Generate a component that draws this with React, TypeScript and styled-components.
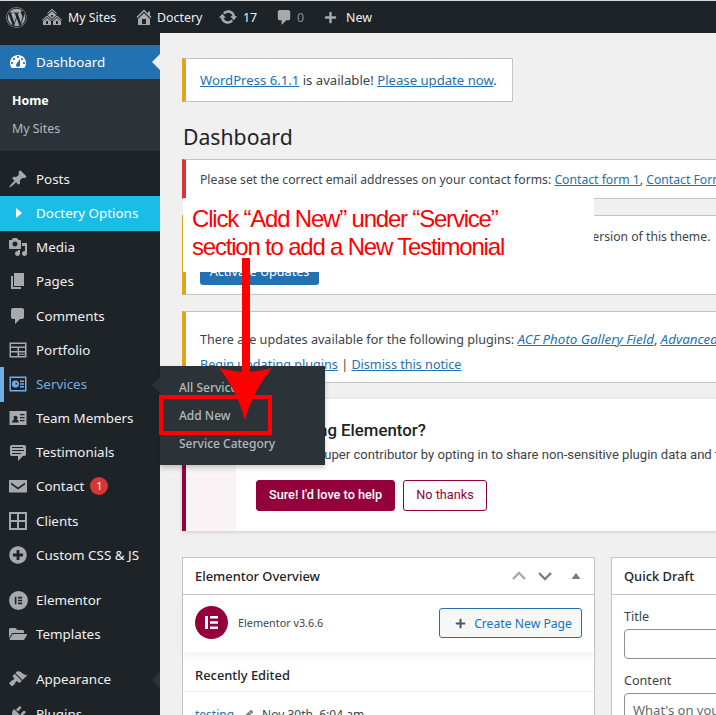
import React from 'react';
import styled, { createGlobalStyle } from 'styled-components';
import { FaWordpress, FaFolderOpen, FaPlusCircle, FaPlus, FaPen } from 'react-icons/fa';

const GlobalStyle = createGlobalStyle`
  html, body {
    margin: 0;
    padding: 0;
    background: #f0f0f1;
  }
  body {
    font-family: "Noto Sans", "Open Sans", sans-serif;
  }
  a {
    color: #2271b1;
  }
`;

const PATHS: Record<string, string> = {
  sites: 'M14.27 6.87L10 3.14 5.73 6.87 5 6.14l5-4.38 5 4.38zM14 8.42l-4.05 3.43L6 8.38v-.74l4-3.5 4 3.5v.78zM11 9.7V8H9v1.7h2zm-1.73 4.03L5 10 .73 13.73 0 13l5-4.38L10 13zm10 0L15 10l-4.27 3.73L10 13l5-4.38L20 13zM5 11l4 3.5V18H1v-3.5zm10 0l4 3.5V18h-8v-3.5zM6 17v-3H4v3h2zm10 0v-3h-2v3h2z',
  home: 'M16 8.5l1.53 1.53-1.06 1.06L10 4.62l-6.47 6.47-1.06-1.06L10 2.5l4 4v-2h2v4zm-6-2.46l6 5.99V18H4v-5.97zM12 17v-5H8v5h4z',
  update: 'M10.2 3.28c3.53 0 6.43 2.61 6.92 6h2.08l-3.5 4-3.5-4h2.32c-.45-1.97-2.21-3.45-4.32-3.45-1.45 0-2.73.71-3.54 1.78L4.95 5.66C6.23 4.2 8.11 3.28 10.2 3.28zm-.4 13.44c-3.52 0-6.43-2.61-6.92-6H.8l3.5-4c1.17 1.33 2.33 2.67 3.5 4H5.48c.45 1.97 2.21 3.45 4.32 3.45 1.45 0 2.73-.71 3.54-1.78l1.71 1.95c-1.28 1.46-3.15 2.38-5.25 2.38z',
  comment: 'M5 2h9c1.1 0 2 .9 2 2v7c0 1.1-.9 2-2 2h-2l-5 5v-5H5c-1.1 0-2-.9-2-2V4c0-1.1.9-2 2-2z',
  dashboard: 'M3.76 16h12.48c1.1-1.37 1.76-3.11 1.76-5 0-4.42-3.58-8-8-8s-8 3.58-8 8c0 1.89.66 3.63 1.76 5zM10 4c.55 0 1 .45 1 1s-.45 1-1 1-1-.45-1-1 .45-1 1-1zM6 6c.55 0 1 .45 1 1s-.45 1-1 1-1-.45-1-1 .45-1 1-1zm8 0c.55 0 1 .45 1 1s-.45 1-1 1-1-.45-1-1 .45-1 1-1zm-5.37 5.55L12 7v6c0 1.1-.9 2-2 2s-2-.9-2-2c0-.57.24-1.08.63-1.45zM4 10c.55 0 1 .45 1 1s-.45 1-1 1-1-.45-1-1 .45-1 1-1zm12 0c.55 0 1 .45 1 1s-.45 1-1 1-1-.45-1-1 .45-1 1-1z',
  post: 'M10.44 3.02l1.82-1.82 6.36 6.35-1.83 1.82c-1.05-.68-2.48-.57-3.41.36l-.75.75c-.92.93-1.04 2.35-.35 3.41l-1.83 1.82-2.41-2.41-2.8 2.79c-.42.42-3.38 2.71-3.8 2.29s1.86-3.39 2.28-3.81l2.79-2.79L4.1 9.36l1.83-1.82c1.05.69 2.48.57 3.4-.36l.75-.75c.93-.92 1.05-2.35.36-3.41z',
  media: 'M13 11V4c0-.55-.45-1-1-1h-1.67L9 1H5L3.67 3H2c-.55 0-1 .45-1 1v7c0 .55.45 1 1 1h10c.55 0 1-.45 1-1zM7 4.5c1.38 0 2.5 1.12 2.5 2.5S8.38 9.5 7 9.5 4.5 8.38 4.5 7 5.62 4.5 7 4.5zM14 6h5v10.5c0 1.38-1.12 2.5-2.5 2.5S14 17.88 14 16.5s1.12-2.5 2.5-2.5c.17 0 .34.02.5.05V9h-3V6zm-4 8.05V13h2v3.5c0 1.38-1.12 2.5-2.5 2.5S7 17.88 7 16.5 8.12 14 9.5 14c.17 0 .34.02.5.05z',
  page: 'M6 15V2h10v13H6zm-1 1h8v2H3V5h2v11z',
  portfolio: 'M1.5 2.500h17v15h-17zM3 4v2.500h14V4zM3 8v3h6.500V8zM11 8v3h6V8zM3 12.500V16h6.500v-3.500zM11 12.500v1.200h6v-1.200zM11 14.800V16h6v-1.200z',
  services: 'M1.5 2.500h17v15h-17zM3 4v12h14V4zM7.500 6.500a3.500 3.500 0 1 1-.01 7A3.500 3.500 0 0 1 7.500 6.500zM7.500 8.500v2h2a2 2 0 0 0-2-2zM12 6.500h4V8h-4zM12 9.300h4v1.400h-4zM12 12h4v1.500h-4z',
  team: 'M1.5 3h17v14h-17zM3.500 14.500h7v-1.300c0-.9-1.100-1.500-1.900-1.700.6-.4.9-1 .9-1.700 0-1.100-.9-2-2-2s-2 .9-2 2c0 .7.3 1.300.9 1.700-.8.2-1.900.8-1.900 1.700zM12 6v1.300h4.500V6zM12 9v1.300h4.500V9zM12 12v1.300h4.500V12z',
  testimonial: 'M4 3h12c.55 0 1.020.2 1.410.59S18 4.450 18 5v7c0 .55-.2 1.020-.59 1.410S16.550 14 16 14h-1l-5 5v-5H4c-.55 0-1.020-.2-1.410-.59S2 12.550 2 12V5c0-.55.2-1.020.59-1.410S3.450 3 4 3zm11 2H4v1h11V5zm1 3H4v1h12V8zm-3 3H4v1h9v-1z',
  mail: 'M1 4h18v12.500H1zM3 6.500l7 5 7-5v2l-7 5-7-5z',
  clients: 'M1 1h18v18H1zM3 3v6h6V3zM11 3v6h6V3zM3 11v6h6v-6zM11 11v6h6v-6z',
  elementor: 'M10 1a9 9 0 1 1-.01 18A9 9 0 0 1 10 1zM6.500 6.500v7H8v-7zM9.500 6.500V8h4V6.500zM9.500 9.250v1.500h4v-1.500zM9.500 12v1.500h4V12z',
  appearance: 'M14.480 11.060L7.410 3.990l1.500-1.500c.5-.56 2.300-.47 3.510.32 1.210.8 1.430 1.280 2.910 2.100 1.180.64 2.450 1.260 4.450.85zm-.71.71L6.700 4.700 4.930 6.470c-.39.39-.39 1.020 0 1.410l1.060 1.060c.39.39.39 1.030 0 1.420-.6.6-1.170.9-1.970 1.260-.81.36-1.170.67-1.620 1.120-.4.4-1.300 1.650-1.300 1.650l3.010 3.010s1.250-.9 1.650-1.300c.45-.45.76-.81 1.120-1.620.36-.8.66-1.370 1.260-1.970.39-.39 1.030-.39 1.420 0l1.060 1.060c.39.39 1.020.39 1.410 0z',
  plugins: 'M13.110 4.360L9.870 7.600 8 5.730l3.240-3.240c.35-.34 1.050-.2 1.560.32.52.51.66 1.210.31 1.550zm-8 1.770l.91-1.120 9.010 9.010-1.190.84c-.71.71-2.630 1.160-3.820 1.160H6.140L4.900 17.260c-.59.59-1.540.59-2.120 0-.59-.58-.59-1.530 0-2.120l1.240-1.240v-3.880c0-1.130.4-3.190 1.090-3.890zm7.260 3.970l3.240-3.240c.34-.35 1.040-.21 1.550.31.52.51.66 1.210.31 1.550l-3.240 3.250z',
};

const Glyph = ({ name, size = 20, color = 'currentColor' }: { name: string; size?: number; color?: string }) => (
  <svg width={size} height={size} viewBox="0 0 20 20" fill={color} fillRule="evenodd">
    <path d={PATHS[name]} />
  </svg>
);

const Page = styled.div`
  position: relative;
  width: 716px;
  height: 715px;
  overflow: hidden;
  display: flex;
  flex-direction: column;
  background: #f0f0f1;
`;

const TopBar = styled.header`
  flex: none;
  height: 33px;
  box-sizing: border-box;
  border-top: 1px solid #d8d8d8;
  background: #1d2327;
  display: flex;
  align-items: center;
  padding-left: 6px;
  color: #f0f0f1;
  font-size: 12.4px;
`;

const BarItem = styled.div<{ $gap?: number; $width: number; $dim?: boolean }>`
  width: ${(p) => p.$width}px;
  flex: none;
  display: flex;
  align-items: center;
  gap: ${(p) => p.$gap ?? 6}px;
  color: ${(p) => (p.$dim ? '#8c8f94' : '#f0f0f1')};
  svg {
    flex: none;
    color: #a7aaad;
  }
`;

const Body = styled.div`
  flex: 1;
  display: flex;
  min-height: 0;
`;

const Sidebar = styled.nav`
  flex: none;
  width: 160px;
  background: #1d2327;
  padding-top: 12px;
  color: #f0f0f1;
  font-size: 13.4px;
`;

const MenuRow = styled.div<{ $bg?: string; $color?: string; $bar?: boolean }>`
  position: relative;
  box-sizing: border-box;
  height: 34.2px;
  padding: 0 0 1px 7px;
  display: flex;
  align-items: center;
  gap: 7px;
  background: ${(p) => p.$bg ?? 'transparent'};
  color: ${(p) => p.$color ?? '#f0f0f1'};
  box-shadow: ${(p) => (p.$bar ? 'inset 4px 0 0 #72aee6' : 'none')};
  white-space: nowrap;
`;

const MenuIcon = styled.span<{ $color?: string }>`
  flex: none;
  width: 22px;
  height: 22px;
  display: flex;
  align-items: center;
  justify-content: center;
  color: ${(p) => p.$color ?? '#a7aaad'};
`;

const Notch = styled.span<{ $color: string }>`
  position: absolute;
  right: 0;
  top: 50%;
  margin-top: -8px;
  border: 8px solid transparent;
  border-left-width: 0;
  border-right-color: ${(p) => p.$color};
`;

const Bullet = styled.span`
  width: 0;
  height: 0;
  margin-left: 9px;
  margin-right: 7px;
  border: 5px solid transparent;
  border-left: 6px solid #fff;
  border-right-width: 0;
`;

const SubMenu = styled.div`
  background: #2c3338;
  height: 72px;
  box-sizing: border-box;
  padding-top: 8px;
  margin-bottom: 11px;
`;

const SubItem = styled.div<{ $active?: boolean }>`
  height: 28px;
  line-height: 28px;
  padding-left: 12px;
  font-size: 12.4px;
  font-weight: ${(p) => (p.$active ? 700 : 400)};
  color: ${(p) => (p.$active ? '#fff' : '#b4b9be')};
`;

const Gap = styled.div`
  height: 11px;
`;

const Badge = styled.span`
  width: 18px;
  height: 18px;
  margin-left: -1px;
  border-radius: 50%;
  background: #d63638;
  color: #fff;
  font-size: 11px;
  line-height: 18px;
  text-align: center;
`;

const Content = styled.main`
  flex: none;
  width: 900px;
  box-sizing: border-box;
  padding: 25px 0 0 22px;
  color: #3c434a;
  font-size: 12.2px;
`;

const Notice = styled.div<{ $accent: string; $height: number; $fit?: boolean; $top?: boolean }>`
  box-sizing: border-box;
  height: ${(p) => p.$height}px;
  width: ${(p) => (p.$fit ? '331px' : 'auto')};
  margin-bottom: 16px;
  padding-left: 14px;
  background: #fff;
  border: 1px solid #c3c4c7;
  border-left: 4px solid ${(p) => p.$accent};
  display: flex;
  flex-direction: column;
  justify-content: ${(p) => (p.$top ? 'flex-start' : 'center')};
  white-space: nowrap;
`;

const LargeLine = styled.p`
  margin: 0;
  font-size: 13.15px;
`;

const NoticeLine = styled.p`
  margin: 0;
  line-height: 25px;
`;

const PluginLines = styled.div`
  padding-top: 15px;
  font-size: 12.6px;
  em {
    font-size: 13.4px;
  }
`;

const ThemeLine = styled(NoticeLine)`
  margin-top: 8px;
`;

const Title = styled.h1`
  margin: 0;
  height: 41px;
  padding: 0 0 0 1px;
  color: #1d2327;
  font-size: 21.2px;
  font-weight: 400;
  line-height: 38px;
`;

const BlueButton = styled.div`
  width: 119px;
  height: 22px;
  margin-top: 14px;
  border-radius: 3px;
  background: #2271b1;
  color: #fff;
  font-size: 12.6px;
  line-height: 17px;
  text-align: center;
`;

const ElementorNotice = styled.section`
  box-sizing: border-box;
  height: 132px;
  margin-bottom: 26px;
  background: #fff;
  border-left: 4px solid #93003c;
  box-shadow: 0 1px 4px rgba(0, 0, 0, 0.15);
  display: flex;
  font-family: Roboto, sans-serif;
`;

const NoticeAside = styled.div`
  flex: none;
  width: 50px;
  background: #f9f3f5;
`;

const NoticeMain = styled.div`
  padding: 19px 0 0 20px;
  white-space: nowrap;
`;

const NoticeHeading = styled.h3`
  margin: 0;
  color: #1d2327;
  font-size: 16.8px;
  font-weight: 500;
  line-height: 24px;
`;

const NoticeText = styled.p`
  margin: 3px 0 0;
  font-size: 13.1px;
  line-height: 20px;
`;

const ButtonRow = styled.div`
  display: flex;
  gap: 8px;
  margin-top: 15px;
`;

const PinkButton = styled.div<{ $outline?: boolean }>`
  box-sizing: border-box;
  height: 31px;
  padding: 0 12px;
  border: 1px solid #93003c;
  border-radius: 3px;
  background: ${(p) => (p.$outline ? '#fff' : '#93003c')};
  color: ${(p) => (p.$outline ? '#93003c' : '#fff')};
  font-size: 12.7px;
  font-weight: ${(p) => (p.$outline ? 400 : 500)};
  line-height: 28px;
`;

const Panels = styled.div`
  display: flex;
  gap: 16px;
  align-items: flex-start;
`;

const Panel = styled.section<{ $width: number }>`
  flex: none;
  width: ${(p) => p.$width}px;
  height: 300px;
  box-sizing: border-box;
  background: #fff;
  border: 1px solid #c3c4c7;
`;

const PanelHead = styled.div`
  height: 37px;
  box-sizing: border-box;
  padding: 0 12px;
  display: flex;
  align-items: center;
  justify-content: space-between;
  border-bottom: 1px solid #c3c4c7;
  color: #1d2327;
  font-size: 12.9px;
  font-weight: 500;
`;

const HeadControls = styled.div`
  display: flex;
  align-items: center;
  gap: 10px;
  margin-right: -2px;
  svg:last-child {
    margin-left: 5px;
  }
`;

const Overview = styled.div`
  height: 57px;
  box-sizing: border-box;
  padding: 11px 12px 0;
  display: flex;
  justify-content: space-between;
  align-items: flex-start;
  box-shadow: 0 5px 8px rgba(0, 0, 0, 0.05);
`;

const Version = styled.div`
  display: flex;
  align-items: center;
  gap: 10px;
  font-size: 10.8px;
`;

const LogoCircle = styled.span`
  width: 33px;
  height: 33px;
  border-radius: 50%;
  background: #93003c;
  display: flex;
  align-items: center;
  justify-content: center;
`;

const CreateButton = styled.div`
  box-sizing: border-box;
  width: 143px;
  height: 30px;
  margin-top: 2px;
  display: flex;
  align-items: center;
  justify-content: flex-end;
  gap: 8px;
  padding-right: 9px;
  border: 1px solid #2271b1;
  border-radius: 3px;
  background: #f6f7f7;
  color: #2271b1;
  font-size: 12.2px;
  svg {
    color: #50575e;
  }
`;

const RecentHead = styled.div`
  height: 40px;
  box-sizing: border-box;
  padding: 13px 12px 0;
  border-bottom: 1px solid #f0f0f1;
  color: #1d2327;
  font-size: 12.9px;
  font-weight: 500;
  line-height: 20px;
`;

const RecentRow = styled.div`
  padding: 14px 12px 0;
  display: flex;
  align-items: center;
  gap: 9px;
  font-size: 12px;
  line-height: 18px;
  svg {
    color: #787c82;
  }
`;

const Draft = styled.div`
  padding: 10px 12px 0;
`;

const FieldLabel = styled.div`
  font-size: 12.6px;
  line-height: 24px;
`;

const Field = styled.div<{ $height: number }>`
  box-sizing: border-box;
  height: ${(p) => p.$height}px;
  margin-bottom: 10px;
  padding: 7px 8px;
  border: 1px solid #8c8f94;
  border-radius: 4px;
  color: #646970;
  font-size: 13px;
`;

const Flyout = styled.div`
  position: absolute;
  left: 160px;
  top: 366px;
  width: 165px;
  height: 99px;
  box-sizing: border-box;
  padding-top: 7px;
  background: #2c3338;
  box-shadow: 0 3px 5px rgba(0, 0, 0, 0.2);
  color: #b4b9be;
  font-size: 12px;
  font-weight: 500;
  &::before {
    content: '';
    position: absolute;
    left: -8px;
    top: 11px;
    border: 8px solid transparent;
    border-left-width: 0;
    border-right-color: #2c3338;
  }
`;

const FlyoutItem = styled.div`
  height: 28px;
  line-height: 29px;
  padding-left: 19px;
`;

const Callout = styled.div`
  position: absolute;
  left: 183px;
  top: 198px;
  width: 411px;
  height: 74px;
  box-sizing: border-box;
  padding: 7px 0 0 9px;
  background: #fff;
  color: #ff0000;
  font-family: "Liberation Sans", Arial, sans-serif;
  font-size: 24px;
  letter-spacing: -1.2px;
  line-height: 28px;
`;

const Markup = styled.svg`
  position: absolute;
  left: 0;
  top: 0;
  pointer-events: none;
`;

const menuTop = [
  { name: 'media', label: 'Media' },
  { name: 'page', label: 'Pages' },
  { name: 'comment', label: 'Comments' },
  { name: 'portfolio', label: 'Portfolio' },
];

const menuMiddle = [
  { name: 'team', label: 'Team Members' },
  { name: 'testimonial', label: 'Testimonials' },
];

const App = () => (
  <Page>
    <GlobalStyle />
    <TopBar>
      <BarItem $width={36}>
        <FaWordpress size={21} />
      </BarItem>
      <BarItem $width={92}>
        <Glyph name="sites" size={20} />
        <span>My Sites</span>
      </BarItem>
      <BarItem $width={84} $gap={3}>
        <Glyph name="home" size={20} />
        <span>Doctery</span>
      </BarItem>
      <BarItem $width={57} $gap={5}>
        <Glyph name="update" size={20} />
        <span>17</span>
      </BarItem>
      <BarItem $width={49} $gap={3} $dim>
        <Glyph name="comment" size={19} />
        <span>0</span>
      </BarItem>
      <BarItem $width={70} $gap={9}>
        <FaPlus size={13} />
        <span>New</span>
      </BarItem>
    </TopBar>
    <Body>
      <Sidebar>
        <MenuRow $bg="#2271b1" $color="#fff">
          <MenuIcon $color="#fff">
            <Glyph name="dashboard" size={20} />
          </MenuIcon>
          Dashboard
          <Notch $color="#f0f0f1" />
        </MenuRow>
        <SubMenu>
          <SubItem $active>Home</SubItem>
          <SubItem>My Sites</SubItem>
        </SubMenu>
        <MenuRow>
          <MenuIcon>
            <Glyph name="post" size={20} />
          </MenuIcon>
          Posts
        </MenuRow>
        <MenuRow $bg="#1bbde8" $color="#fff">
          <Bullet />
          Doctery Options
        </MenuRow>
        {menuTop.map((item) => (
          <MenuRow key={item.label}>
            <MenuIcon>
              <Glyph name={item.name} size={20} />
            </MenuIcon>
            {item.label}
          </MenuRow>
        ))}
        <MenuRow $bar $color="#72aee6">
          <MenuIcon $color="#72aee6">
            <Glyph name="services" size={20} />
          </MenuIcon>
          Services
        </MenuRow>
        {menuMiddle.map((item) => (
          <MenuRow key={item.label}>
            <MenuIcon>
              <Glyph name={item.name} size={20} />
            </MenuIcon>
            {item.label}
          </MenuRow>
        ))}
        <MenuRow>
          <MenuIcon>
            <Glyph name="mail" size={20} />
          </MenuIcon>
          Contact
          <Badge>1</Badge>
        </MenuRow>
        <MenuRow>
          <MenuIcon>
            <Glyph name="clients" size={20} />
          </MenuIcon>
          Clients
        </MenuRow>
        <MenuRow>
          <MenuIcon>
            <FaPlusCircle size={18} />
          </MenuIcon>
          Custom CSS &amp; JS
        </MenuRow>
        <Gap />
        <MenuRow>
          <MenuIcon>
            <Glyph name="elementor" size={21} />
          </MenuIcon>
          Elementor
        </MenuRow>
        <MenuRow>
          <MenuIcon>
            <FaFolderOpen size={18} />
          </MenuIcon>
          Templates
        </MenuRow>
        <Gap />
        <MenuRow>
          <MenuIcon>
            <Glyph name="appearance" size={20} />
          </MenuIcon>
          Appearance
          <Notch $color="#2c3338" />
        </MenuRow>
        <MenuRow>
          <MenuIcon>
            <Glyph name="plugins" size={20} />
          </MenuIcon>
          Plugins
        </MenuRow>
      </Sidebar>
      <Content>
        <Notice $accent="#dba617" $height={44} $fit>
          <LargeLine>
            <a href="#wp">WordPress 6.1.1</a> is available! <a href="#up">Please update now</a>.
          </LargeLine>
        </Notice>
        <Title>Dashboard</Title>
        <Notice $accent="#d63638" $height={40}>
          <NoticeLine>
            Please set the correct email addresses on your contact forms: <a href="#c1">Contact form 1</a>,{' '}
            <a href="#c2">Contact Form 2</a>
          </NoticeLine>
        </Notice>
        <Notice $accent="#dba617" $height={80} $top>
          <ThemeLine>Your site is running an older, unsupported and very badly outdated version of this theme.</ThemeLine>
          <BlueButton>Activate Updates</BlueButton>
        </Notice>
        <Notice $accent="#dba617" $height={72} $top>
          <PluginLines>
            <NoticeLine>
              There are updates available for the following plugins:{' '}
              <a href="#acf">
                <em>ACF Photo Gallery Field</em>
              </a>
              ,{' '}
              <a href="#adv">
                <em>Advanced Custom Fields</em>
              </a>
            </NoticeLine>
            <NoticeLine>
              <a href="#begin">Begin updating plugins</a> | <a href="#dismiss">Dismiss this notice</a>
            </NoticeLine>
          </PluginLines>
        </Notice>
        <ElementorNotice>
          <NoticeAside />
          <NoticeMain>
            <NoticeHeading>Love using Elementor?</NoticeHeading>
            <NoticeText>Become a super contributor by opting in to share non-sensitive plugin data and to receive</NoticeText>
            <ButtonRow>
              <PinkButton>Sure! I'd love to help</PinkButton>
              <PinkButton $outline>No thanks</PinkButton>
            </ButtonRow>
          </NoticeMain>
        </ElementorNotice>
        <Panels>
          <Panel $width={413}>
            <PanelHead>
              Elementor Overview
              <HeadControls>
                <svg width="16" height="10" viewBox="0 0 16 10" fill="none" stroke="#a7aaad" strokeWidth="2.4">
                  <path d="M2 8l6-6 6 6" />
                </svg>
                <svg width="16" height="10" viewBox="0 0 16 10" fill="none" stroke="#787c82" strokeWidth="2.4">
                  <path d="M2 2l6 6 6-6" />
                </svg>
                <svg width="16" height="10" viewBox="0 0 16 10" fill="#787c82">
                  <path d="M8 2l4.500 6h-9z" />
                </svg>
              </HeadControls>
            </PanelHead>
            <Overview>
              <Version>
                <LogoCircle>
                  <svg width="15" height="15" viewBox="0 0 15 15" fill="#fff">
                    <path d="M1 1h3v13H1zM6 1h8v2.600H6zM6 6.200h8v2.600H6zM6 11.400h8V14H6z" />
                  </svg>
                </LogoCircle>
                Elementor v3.6.6
              </Version>
              <CreateButton>
                <FaPlus size={11} />
                Create New Page
              </CreateButton>
            </Overview>
            <RecentHead>Recently Edited</RecentHead>
            <RecentRow>
              <a href="#testing">testing</a>
              <FaPen size={10} />
              Nov 30th, 6:04 am
            </RecentRow>
          </Panel>
          <Panel $width={400}>
            <PanelHead>Quick Draft</PanelHead>
            <Draft>
              <FieldLabel>Title</FieldLabel>
              <Field $height={30} />
              <FieldLabel>Content</FieldLabel>
              <Field $height={80}>What's on your mind?</Field>
            </Draft>
          </Panel>
        </Panels>
      </Content>
    </Body>
    <Flyout>
      <FlyoutItem>All Services</FlyoutItem>
      <FlyoutItem>Add New</FlyoutItem>
      <FlyoutItem>Service Category</FlyoutItem>
    </Flyout>
    <Callout>
      Click “Add New” under “Service”
      <br />
      section to add a New Testimonial
    </Callout>
    <Markup width="716" height="715" viewBox="0 0 716 715">
      <rect x="161" y="397" width="109" height="36" fill="none" stroke="#ff0000" strokeWidth="4" />
      <path fill="#ff0000" d="M242 258h8v114c6-1 15-2 22-4-10 12-21 30-27 52-6-22-16-40-26-52 7 2 16 3 23 4z" />
    </Markup>
  </Page>
);

export default App;
